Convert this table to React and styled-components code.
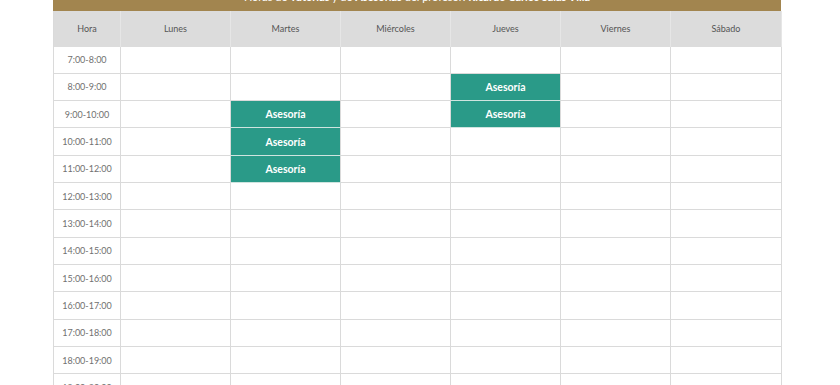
import React from "react";
import styled, { createGlobalStyle } from "styled-components";

const Global = createGlobalStyle`
  html, body { margin: 0; padding: 0; background: #ffffff; }
  body { font-family: Lato, "Open Sans", sans-serif; }
`;

const Page = styled.div`
  width: 840px;
  height: 385px;
  overflow: hidden;
  padding-left: 53px;
  box-sizing: border-box;
`;

const Board = styled.div`
  width: 728px;
`;

const Banner = styled.div`
  height: 11px;
  background: #a2854f;
  overflow: hidden;
  display: flex;
  align-items: flex-end;
  justify-content: center;
  color: #ffffff;
  font-size: 11px;
  span {
    line-height: 12px;
    margin-bottom: 8px;
    white-space: nowrap;
  }
  b { font-weight: 700; }
`;

const Grid = styled.div`
  display: grid;
  grid-template-columns: 67px repeat(5, 110px) 111px;
  grid-template-rows: 35.5px;
  grid-auto-rows: 27.33px;
  border-left: 1px solid #dadada;
`;

const HeadCell = styled.div`
  background: #dcdcdc;
  border-right: 1px solid #e6e6e6;
  display: flex;
  align-items: center;
  justify-content: center;
  font-size: 9px;
  color: #555;
  box-sizing: border-box;
`;

const Cell = styled.div`
  border-right: 1px solid #dadada;
  border-bottom: 1px solid #dadada;
  box-sizing: border-box;
  display: flex;
  align-items: center;
  justify-content: center;
  font-size: ${(p) => (p.$time ? "9px" : "10.5px")};
  font-weight: ${(p) => (p.$busy ? 700 : 400)};
  color: ${(p) => (p.$busy ? "#ffffff" : "#707070")};
  background: ${(p) => (p.$busy ? "#2a9a88" : "#ffffff")};
  border-bottom-color: ${(p) => (p.$busy ? "#cfe4df" : "#dadada")};
`;

const days = ["Lunes", "Martes", "Miércoles", "Jueves", "Viernes", "Sábado"];
const hours = [];
for (let h = 7; h < 20; h++) hours.push(`${h}:00-${h + 1}:00`);

const busy = {
  "8-Jueves": true,
  "9-Martes": true,
  "9-Jueves": true,
  "10-Martes": true,
  "11-Martes": true,
};

export default function App() {
  return (
    <Page>
      <Global />
      <Board>
        <Banner>
          <span>
            Horas de <b>Tutorías</b> y de <b>Asesorías</b> del profesor:{" "}
            <b>Ricardo Carlos Salas Villa</b>
          </span>
        </Banner>
        <Grid>
          <HeadCell>Hora</HeadCell>
          {days.map((d) => (
            <HeadCell key={d}>{d}</HeadCell>
          ))}
          {hours.map((label, i) => {
            const h = 7 + i;
            return (
              <React.Fragment key={label}>
                <Cell $time>{label}</Cell>
                {days.map((d) => {
                  const b = busy[`${h}-${d}`];
                  return (
                    <Cell key={d} $busy={b}>
                      {b ? "Asesoría" : null}
                    </Cell>
                  );
                })}
              </React.Fragment>
            );
          })}
        </Grid>
      </Board>
    </Page>
  );
}
